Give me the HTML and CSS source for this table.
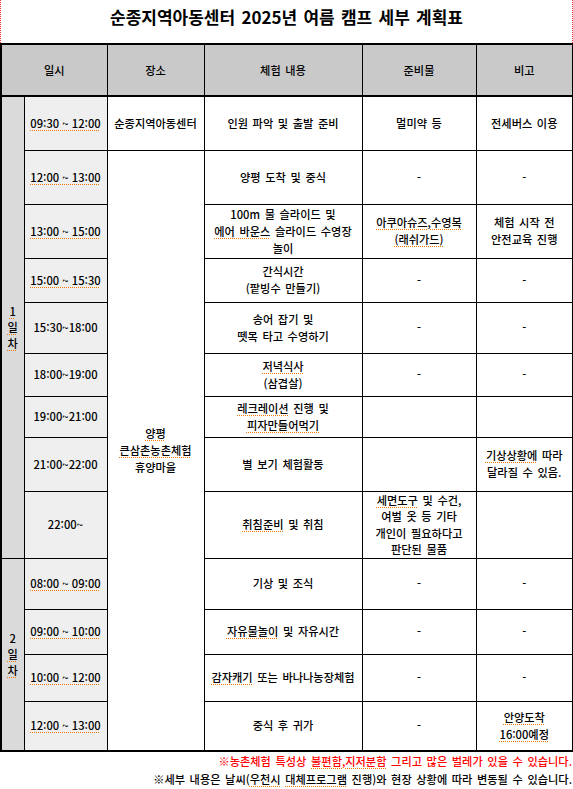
FILE: index.html
```html
<!DOCTYPE html>
<html lang="ko">
<head>
<meta charset="utf-8">
<link rel="stylesheet" href="styles.css">
</head>
<body>
<div class="page">
  <div class="title">순종지역아동센터 2025년 여름 캠프 세부 계획표</div>
  <table class="plan">
    <colgroup>
      <col class="c-day"><col class="c-time"><col class="c-place"><col class="c-content"><col class="c-prep"><col class="c-note">
    </colgroup>
    <thead>
      <tr class="h-head">
        <th colspan="2">일시</th><th>장소</th><th>체험 내용</th><th>준비물</th><th>비고</th>
      </tr>
    </thead>
    <tbody>
      <tr class="h54">
        <td class="day" rowspan="9"><span class="sp">1</span><br><span class="sp">일</span><br><span class="sp">차</span></td>
        <td class="time"><span class="sp">09:30 ~ 12:00</span></td>
        <td>순종지역아동센터</td>
        <td>인원 파악 및 출발 준비</td>
        <td>멀미약 등</td>
        <td>전세버스 이용</td>
      </tr>
      <tr class="h54">
        <td class="time"><span class="sp">12:00 ~ 13:00</span></td>
        <td rowspan="12" class="place"><span class="sp">양평</span><br><span class="sp">큰삼촌농촌체험</span><br>휴양마을</td>
        <td>양평 도착 및 중식</td>
        <td>-</td>
        <td>-</td>
      </tr>
      <tr class="h54">
        <td class="time"><span class="sp">13:00 ~ 15:00</span></td>
        <td>100m 물 슬라이드 및<br><span class="sp">에어 바운스</span> 슬라이드 수영장<br>놀이</td>
        <td><span class="sp">아쿠아슈즈,수영복</span><br><span class="sp">(래쉬가드)</span></td>
        <td>체험 시작 전<br>안전교육 진행</td>
      </tr>
      <tr class="h44">
        <td class="time"><span class="sp">15:00 ~ 15:30</span></td>
        <td>간식시간<br>(팥빙수 만들기)</td>
        <td>-</td>
        <td>-</td>
      </tr>
      <tr class="h51">
        <td class="time">15:30~18:00</td>
        <td>송어 잡기 및<br>뗏목 타고 수영하기</td>
        <td>-</td>
        <td>-</td>
      </tr>
      <tr class="h43">
        <td class="time">18:00~19:00</td>
        <td><span class="sp">저녁식사</span><br>(삼겹살)</td>
        <td>-</td>
        <td>-</td>
      </tr>
      <tr class="h41">
        <td class="time">19:00~21:00</td>
        <td><span class="sp">레크레이션</span> 진행 및<br><span class="sp">피자만들어먹기</span></td>
        <td></td>
        <td></td>
      </tr>
      <tr class="h54">
        <td class="time">21:00~22:00</td>
        <td>별 보기 체험활동</td>
        <td></td>
        <td><span class="sp">기상상황에</span> 따라<br>달라질 수 있음.</td>
      </tr>
      <tr class="h65">
        <td class="time">22:00~</td>
        <td><span class="sp">취침준비</span> 및 취침</td>
        <td class="tight"><span class="sp">세면도구</span> 및 수건,<br>여벌 옷 등 기타<br>개인이 필요하다고<br>판단된 물품</td>
        <td></td>
      </tr>
      <tr class="h51">
        <td class="day" rowspan="4">2<br><span class="sp">일</span><br><span class="sp">차</span></td>
        <td class="time"><span class="sp">08:00 ~ 09:00</span></td>
        <td>기상 및 조식</td>
        <td>-</td>
        <td>-</td>
      </tr>
      <tr class="h45">
        <td class="time"><span class="sp">09:00 ~ 10:00</span></td>
        <td><span class="sp">자유물놀이</span> 및 자유시간</td>
        <td>-</td>
        <td>-</td>
      </tr>
      <tr class="h47">
        <td class="time"><span class="sp">10:00 ~ 12:00</span></td>
        <td><span class="sp">감자캐기</span> 또는 바나나농장체험</td>
        <td>-</td>
        <td>-</td>
      </tr>
      <tr class="h50">
        <td class="time"><span class="sp">12:00 ~ 13:00</span></td>
        <td>중식 후 귀가</td>
        <td>-</td>
        <td><span class="sp">안양도착</span><br><span class="sp">16:00예정</span></td>
      </tr>
    </tbody>
  </table>
  <div class="notes">
    <p class="warn">※농촌체험 특성상 <span class="sp">불편함,지저분함</span> 그리고 많은 벌레가 있을 수 있습니다.</p>
    <p>※세부 내용은 날씨(<span class="sp">우천시</span> <span class="sp">대체프로그램</span> 진행)와 현장 상황에 따라 변동될 수 있습니다.</p>
  </div>
</div>
</body>
</html>
```

FILE: styles.css
```css
html, body {
  margin: 0;
  padding: 0;
  background: #ffffff;
}

body {
  font-family: "Noto Sans CJK KR", "Malgun Gothic", sans-serif;
  font-size: 11.2px;
  font-weight: 500;
  color: #000;
  word-spacing: 1.5px;
}

.page {
  width: 573px;
}

.title {
  height: 43px;
  line-height: 34px;
  text-align: center;
  font-size: 17px;
  font-weight: 700;
  border-left: 1px dotted #ff3030;
  border-right: 1px dotted #ff3030;
  box-sizing: border-box;
  word-spacing: 1.5px;
}

.plan {
  width: 572px;
  border-collapse: collapse;
  table-layout: fixed;
  border: 2px solid #000;
}

.c-day { width: 23px; }
.c-time { width: 83px; }
.c-place { width: 97px; }
.c-content { width: 158px; }
.c-prep { width: 114px; }
.c-note { width: 97px; }

.plan th,
.plan td {
  border: 1px solid #000;
  padding: 0;
  text-align: center;
  vertical-align: middle;
  line-height: 17px;
  font-weight: 500;
  overflow: hidden;
}

.plan th {
  background: #c9c9c9;
  border-bottom: 2px solid #000;
}

.h-head { height: 52px; }
.h54 { height: 54px; }
.h44 { height: 44px; }
.h51 { height: 51px; }
.h50 { height: 50px; }
.h43 { height: 43px; }
.h41 { height: 41px; }
.h65 { height: 65px; }
.h45 { height: 45px; }
.h47 { height: 47px; }

.plan td.day {
  background: #dadada;
  line-height: 16px;
}

.plan td.time {
  background: #efefef;
  word-spacing: 0;
}

.plan td.place {
  line-height: 17px;
}

.plan td.tight {
  line-height: 16.5px;
}

.sp {
  text-decoration: underline dotted #f07800;
  text-decoration-thickness: 1px;
  text-underline-offset: 2px;
}

.notes {
  text-align: right;
  width: 572px;
}

.notes p {
  margin: 0;
  line-height: 18px;
  white-space: nowrap;
}

.notes .warn {
  color: #ff0000;
}
```
